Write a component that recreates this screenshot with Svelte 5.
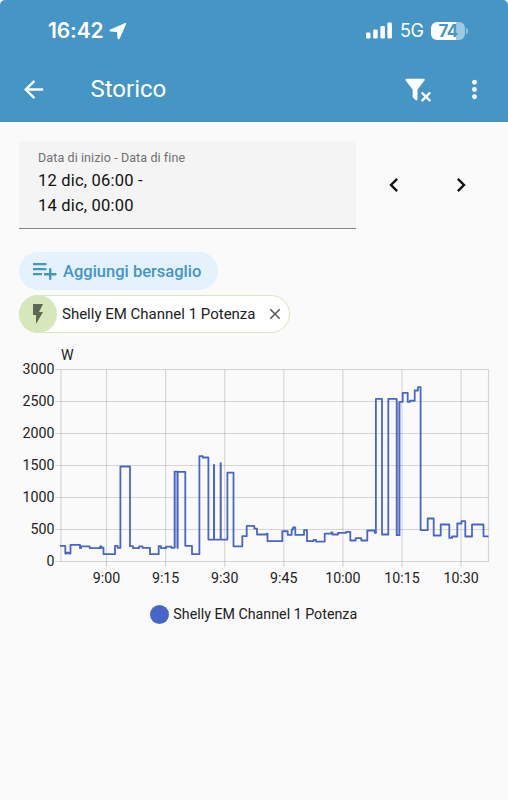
<script lang="ts">
	const entity = "Shelly EM Channel 1 Potenza";

	const wattTicks = [3000, 2500, 2000, 1500, 1000, 500, 0];
	const timeTicks = ["9:00", "9:15", "9:30", "9:45", "10:00", "10:15", "10:30"];

	// [x, watts], every value holds until the next one
	const readings = [
		[60, 245], [65.3, 125], [67, 140], [69, 125], [70.5, 260], [80, 208], [81, 235],
		[89.7, 208], [100, 235], [101.5, 215], [103.5, 114], [115, 245], [117.7, 212],
		[120.4, 1484], [130, 240], [133, 208], [139, 235], [142.5, 213], [150, 114],
		[158.7, 240], [161, 208], [166, 233], [171.5, 213], [174.6, 1405], [177.6, 212],
		[177.7, 1400], [185.3, 245], [192, 114], [199.4, 1645], [202.7, 1625], [208.4, 343],
		[213.9, 1510], [214.1, 343], [220.6, 1535], [220.8, 343], [227.4, 1390], [233.5, 235],
		[242.3, 395], [246.7, 556], [254.3, 515], [257, 422], [266.7, 435], [267.5, 317],
		[282.3, 473], [287.7, 416], [291.7, 500], [293, 531], [295.3, 416], [304, 489],
		[307, 317], [313.5, 338], [316, 312], [324.7, 437], [331.3, 453], [332.5, 422],
		[338, 447], [346, 463], [350.3, 328], [355.7, 364], [361.3, 328], [367.3, 484],
		[374.7, 447], [375.9, 2541], [382, 422], [388.3, 2541], [396.7, 411], [399.5, 2495],
		[402.7, 2635], [407.7, 2495], [410, 2512], [414.7, 2672], [418, 2724], [420.6, 489],
		[427.7, 672], [433.7, 406], [440.7, 578], [449.3, 369], [452, 391], [457.3, 594],
		[461.5, 630], [465.3, 391], [472, 578], [483.5, 394]
	];

	const wattY = (w: number) => 221.5 - w * 0.064;
	const timeX = (i: number) => 106.5 + i * 59.1;

	const line =
		`M60 ${wattY(readings[0][1])}` +
		readings.map(([x, w]) => `H${x}V${wattY(w)}`).join("") +
		"H488.5";
</script>

<div class="screen">
	<header>
		<div class="status">
			<span class="clock">16:42</span>
			<svg class="location" viewBox="0 0 18 18" width="18" height="18">
				<path d="M16.3 1 1.2 7.4c-1 .5-.8 2 .4 2.1l6.5.4.4 6.4c.1 1.200 1.600 1.400 2.100.4L17.100 2c.3-.7-.2-1.300-.8-1Z" />
			</svg>
			<svg class="signal" viewBox="0 0 27 17" width="27" height="17">
				<rect x="0" y="10.5" width="4.5" height="6" rx="1.3" />
				<rect x="7.2" y="7.5" width="4.5" height="9" rx="1.3" />
				<rect x="14.4" y="4" width="4.5" height="12.5" rx="1.3" />
				<rect x="21.4" y="0.5" width="4.5" height="16" rx="1.3" />
			</svg>
			<span class="network">5G</span>
			<div class="battery">74</div>
			<i class="cap"></i>
		</div>
		<div class="toolbar">
			<svg class="back" viewBox="0 0 24 24" width="29" height="29">
				<path d="M20,11V13H8L13.5,18.5L12.08,19.92L4.16,12L12.08,4.08L13.5,5.5L8,11H20Z" />
			</svg>
			<h1>Storico</h1>
			<svg class="filter" viewBox="0 0 24 24" width="29" height="29">
				<path d="M14.76,20.83L17.6,18L14.76,15.17L16.17,13.76L19,16.57L21.83,13.76L23.24,15.17L20.43,18L23.24,20.83L21.83,22.24L19,19.4L16.17,22.24L14.76,20.83M12,12V19.88C12.04,20.18 11.94,20.5 11.71,20.71C11.32,21.1 10.69,21.1 10.3,20.71L8.29,18.7C8.06,18.47 7.96,18.16 8,17.87V12H7.97L2.21,4.62C1.87,4.19 1.95,3.56 2.38,3.22C2.57,3.08 2.78,3 3,3H17C17.22,3 17.43,3.08 17.62,3.22C18.05,3.56 18.13,4.19 17.79,4.62L12.03,12H12Z" />
			</svg>
			<svg class="menu" viewBox="0 0 24 24" width="29" height="29">
				<path d="M12,16A2,2 0 0,1 14,18A2,2 0 0,1 12,20A2,2 0 0,1 10,18A2,2 0 0,1 12,16M12,10A2,2 0 0,1 14,12A2,2 0 0,1 12,14A2,2 0 0,1 10,12A2,2 0 0,1 12,10M12,4A2,2 0 0,1 14,6A2,2 0 0,1 12,8A2,2 0 0,1 10,6A2,2 0 0,1 12,4Z" />
			</svg>
		</div>
	</header>

	<div class="range">
		<div class="field">
			<div class="label">Data di inizio - Data di fine</div>
			<div class="value">12 dic, 06:00 -<br />14 dic, 00:00</div>
		</div>
		<svg viewBox="0 0 24 24" width="28" height="28">
			<path d="M15.41,16.58L10.83,12L15.41,7.41L14,6L8,12L14,18L15.41,16.58Z" />
		</svg>
		<svg viewBox="0 0 24 24" width="28" height="28">
			<path d="M8.59,16.58L13.17,12L8.59,7.41L10,6L16,12L10,18L8.59,16.58Z" />
		</svg>
	</div>

	<div class="targets">
		<div class="add">
			<svg viewBox="0 0 24 17" width="24" height="17">
				<path d="M0 0h13.5v2.2H0ZM0 5h13.5v2.2H0ZM0 10h9v2.2H0ZM16 5.2h2.4v4.9h5v2.3h-5v4.4H16v-4.4h-5v-2.3h5Z" />
			</svg>
			<span>Aggiungi bersaglio</span>
		</div>
		<div class="chip">
			<div class="bolt">
				<svg viewBox="0 0 24 24" width="24" height="24">
					<path d="M7,2V13H10V22L17,10H13L17,2H7Z" />
				</svg>
			</div>
			<span>{entity}</span>
			<svg class="remove" viewBox="0 0 24 24" width="18" height="18">
				<path d="M19,6.41L17.59,5L12,10.59L6.41,5L5,6.41L10.59,12L5,17.59L6.41,19L12,13.41L17.59,19L19,17.59L13.41,12L19,6.41Z" />
			</svg>
		</div>
	</div>

	<svg class="chart" viewBox="0 0 508 250" width="508" height="250">
		<text x="61" y="20">W</text>
		{#each wattTicks as w}
			<path class="grid" d="M55.5 {wattY(w)}H488.5" />
			<text x="54.5" y={wattY(w) + 4.8} text-anchor="end">{w}</text>
		{/each}
		<path class="grid" d="M61 29.5V221.5M488.5 29.5V221.5" />
		{#each timeTicks as t, i}
			<path class="grid" d="M{timeX(i)} 29.5V227" />
			<text x={timeX(i)} y="243" text-anchor="middle">{t}</text>
		{/each}
		<path class="shade" d="M174.6 131.6h3V208h-3ZM396.7 62h2.8v133h-2.8Z" />
		<path class="line" d={line} />
	</svg>

	<div class="legend">
		<i></i>
		<span>{entity}</span>
	</div>
</div>

<style>
	:global(body) {
		margin: 0;
		background: #fafafa;
	}

	.screen {
		width: 508px;
		height: 800px;
		overflow: hidden;
		background: #fafafa;
		color: #212121;
		font-family: Roboto, sans-serif;
	}

	svg {
		display: block;
		flex: none;
		fill: currentColor;
	}

	header {
		height: 122px;
		border-radius: 5px 5px 0 0;
		background: #4596c4;
		color: #fff;
	}

	.status {
		display: flex;
		align-items: center;
		box-sizing: border-box;
		height: 61px;
		padding-left: 48px;
		font-family: Inter, sans-serif;
	}

	.clock {
		width: 61px;
		font-size: 21px;
		font-weight: 600;
		letter-spacing: -0.1px;
	}

	.signal {
		margin-left: 239px;
	}

	.network {
		width: 31px;
		margin-left: 7px;
		font-size: 18px;
		letter-spacing: -0.5px;
	}

	.battery {
		width: 34px;
		height: 18px;
		border-radius: 6px;
		background: linear-gradient(90deg, #fff 74%, #9dcae1 74%);
		color: #4596c4;
		font-size: 17px;
		font-weight: 700;
		line-height: 18px;
		letter-spacing: -0.6px;
		text-align: center;
	}

	.cap {
		width: 2px;
		height: 6px;
		margin-left: 1px;
		border-radius: 0 2px 2px 0;
		background: #8fc0dc;
	}

	.toolbar {
		display: flex;
		align-items: center;
		height: 56px;
		padding-left: 19px;
	}

	h1 {
		width: 312.5px;
		margin: 0 0 0 42.5px;
		font-size: 24px;
		font-weight: 400;
		letter-spacing: 0;
	}

	.menu {
		margin-left: 28px;
	}

	.range {
		display: flex;
		align-items: center;
		margin: 19px 0 0 19px;
		color: #111;
	}

	.range > svg:nth-of-type(1) {
		margin-left: 24px;
	}

	.range > svg:nth-of-type(2) {
		margin-left: 39px;
	}

	.field {
		box-sizing: border-box;
		width: 337px;
		height: 88px;
		padding: 9px 19px;
		border-bottom: 1px solid #858585;
		border-radius: 4px 4px 0 0;
		background: #f4f4f4;
	}

	.label {
		color: #707070;
		font-size: 12.5px;
		line-height: 16px;
		letter-spacing: 0.1px;
	}

	.value {
		margin-top: 2px;
		font-size: 16.5px;
		line-height: 25px;
		letter-spacing: 0.2px;
	}

	.targets {
		display: flex;
		flex-direction: column;
		align-items: flex-start;
		gap: 5px;
		margin: 23px 0 0 19px;
	}

	.add {
		display: flex;
		align-items: center;
		box-sizing: border-box;
		width: 199px;
		height: 38px;
		padding-left: 14px;
		border-radius: 19px;
		background: #e3f2fd;
		color: #4596c4;
		font-size: 16.5px;
		font-weight: 500;
	}

	.add span {
		margin-left: 6px;
		white-space: nowrap;
	}

	.chip {
		display: flex;
		align-items: center;
		box-sizing: border-box;
		width: 271px;
		height: 38px;
		border: 1px solid #d7e8bf;
		border-radius: 19px;
		background: #fff;
		font-size: 15px;
	}

	.chip span {
		width: 202px;
		margin-left: 5px;
		white-space: nowrap;
	}

	.bolt {
		display: grid;
		place-items: center;
		width: 38px;
		height: 38px;
		margin-left: -1px;
		border-radius: 50%;
		background: #d5e7bb;
		color: #5f6756;
	}

	.remove {
		margin-left: 2px;
		color: #555;
	}

	.chart {
		margin-top: 7px;
		font-size: 14.2px;
	}

	.grid {
		fill: none;
		stroke: #000;
		stroke-opacity: 0.14;
		stroke-width: 1.2;
	}

	.shade {
		fill: #4766c8;
		fill-opacity: 0.35;
	}

	.line {
		fill: none;
		stroke: #4766c8;
		stroke-width: 1.8;
		stroke-linejoin: round;
	}

	.legend {
		display: flex;
		align-items: center;
		justify-content: center;
		gap: 4.5px;
		margin: 14px 1px 0 0;
		font-size: 14.25px;
		line-height: 20px;
	}

	.legend i {
		width: 19px;
		height: 19px;
		border-radius: 50%;
		background: #4766c8;
	}
</style>
